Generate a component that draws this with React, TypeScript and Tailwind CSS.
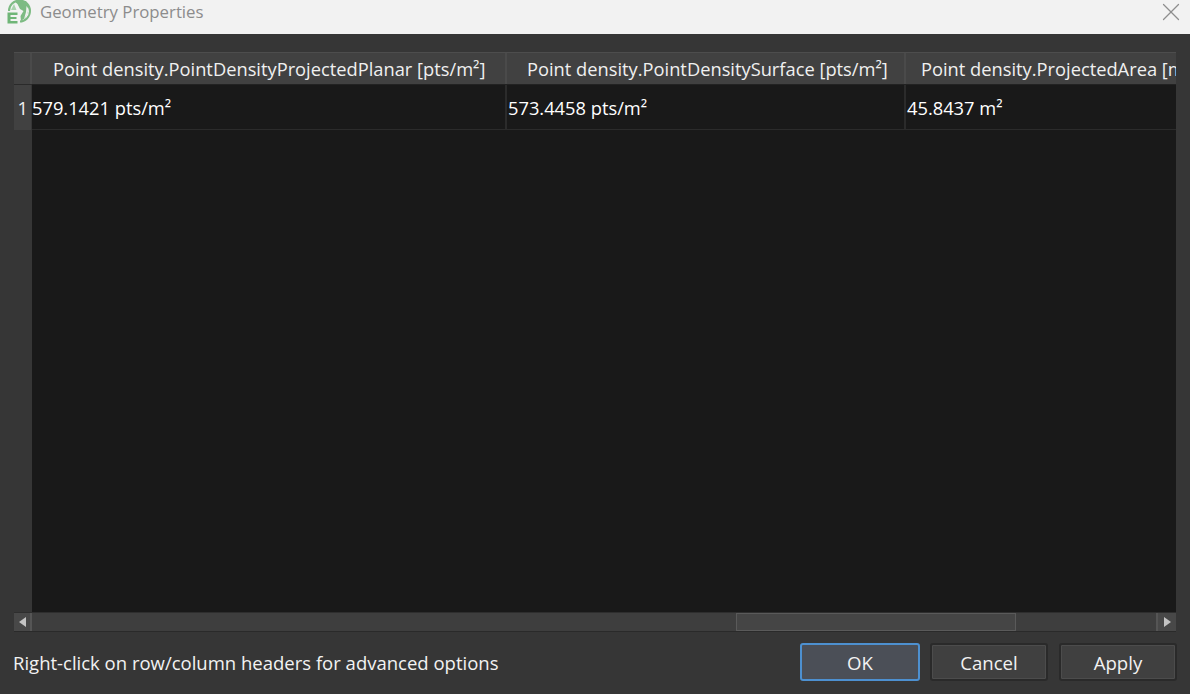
import { X } from 'lucide-react';

const font = "font-['Open_Sans','Noto_Sans',sans-serif]";

function Logo() {
  return (
    <svg width="26" height="25" viewBox="0 0 26 25" className="shrink-0">
      <circle cx="13.5" cy="11" r="10.5" fill="none" stroke="#7dbb83" strokeWidth="2" />
      <path d="M8 1 H20 L23 7 L21.5 13 L19 18 L15 21 L14.5 16 L17.5 11 L14 9 L11.5 4 Z" fill="#7dbb83" />
      <path d="M20.5 6 L22.5 9 L21 15 L18 19 L20 12 Z" fill="#f2f2f2" />
      <path d="M5 10 L8 4 L10.5 10 Z" fill="#a9d3ae" />
      <rect x="0" y="11" width="14" height="14" fill="#f2f2f2" />
      <path d="M1.5 12.5 H11.5 V15 H4.5 V17 H10.5 V19 H4.5 V21 H11.5 V23.5 H1.5 Z" fill="#6fb577" />
    </svg>
  );
}

function HeaderCell({ className, children }: { className: string; children?: React.ReactNode }) {
  return (
    <div className={`h-full shrink-0 bg-[#414141] whitespace-nowrap overflow-hidden text-[#f0f0f0] text-[18.3px] leading-[32px] ${className}`}>
      {children}
    </div>
  );
}

function ValueCell({ className, children }: { className: string; children: React.ReactNode }) {
  return (
    <div className={`h-full shrink-0 whitespace-nowrap overflow-hidden text-white text-[18.3px] leading-[46px] ${className}`}>
      {children}
    </div>
  );
}

function DialogButton({ label, primary, className }: { label: string; primary?: boolean; className: string }) {
  return (
    <button
      className={`h-[38px] rounded-[3px] text-[18.6px] pt-[1px] text-[#f2f2f2] flex items-center justify-center ${
        primary
          ? 'border-2 border-[#4d90d0] bg-[#4b4f57]'
          : 'border-2 border-[#2a2a2a] bg-[#404040] shadow-[inset_0_0_0_1px_#4c4c4c]'
      } ${className}`}
    >
      {label}
    </button>
  );
}

export default function App() {
  return (
    <div className={`w-[1190px] h-[694px] flex flex-col overflow-hidden bg-[#363636] ${font}`}>
      <div className="h-[34px] shrink-0 bg-[#f2f2f2] flex items-start pl-[6px] pr-[4px]">
        <Logo />
        <span className="ml-[8px] text-[16.8px] leading-[24px] text-[#8c8c8c]">Geometry Properties</span>
        <X size={30} strokeWidth={1} className="ml-auto -mt-[3px] text-[#8e8e8e]" />
      </div>

      <div className="mt-[18px] mx-[14px] w-[1162px] flex flex-col">
        <div className="h-[32px] shrink-0 flex border-t border-[#4d4d4d]">
          <HeaderCell className="w-[18px] border-r-2 border-[#4a4a4a]" />
          <HeaderCell className="w-[475px] pl-[21px] border-r-2 border-[#4a4a4a]">
            Point density.PointDensityProjectedPlanar [pts/m²]
          </HeaderCell>
          <HeaderCell className="w-[399px] pl-[20px] border-r-2 border-[#4a4a4a]">
            Point density.PointDensitySurface [pts/m²]
          </HeaderCell>
          <HeaderCell className="w-[270px] pl-[15px]">
            Point density.ProjectedArea [m²]
          </HeaderCell>
        </div>

        <div className="h-[528px] shrink-0 flex">
          <div className="w-[18px] shrink-0 border-t border-[#2a2a2a]">
            <div className="w-[17px] h-[45px] bg-[#414141] text-right pr-[3px] text-[#f0f0f0] text-[18.3px] leading-[46px]">
              1
            </div>
          </div>
          <div className="flex-1 bg-[#191919]">
            <div className="h-[46px] flex border-b border-[#2b2b2b] border-t border-t-[#222222]">
              <ValueCell className="w-[475px] border-r-2 border-[#2b2b2b]">579.1421 pts/m²</ValueCell>
              <ValueCell className="w-[399px] border-r-2 border-[#2b2b2b] pl-[1px]">573.4458 pts/m²</ValueCell>
              <ValueCell className="w-[270px] pl-[1px]">45.8437 m²</ValueCell>
            </div>
          </div>
        </div>

        <div className="h-[20px] flex bg-[#3e3e3e] border-b border-[#2a2a2a] border-t border-t-[#2e2e2e]">
          <div className="w-[18px] border-r-2 border-[#555555] bg-[#484848] flex items-center justify-center">
            <div className="w-0 h-0 border-y-[5px] border-y-transparent border-r-[7px] border-r-[#c4c4c4]" />
          </div>
          <div className="w-[704px]" />
          <div className="w-[280px] border border-[#5a5a5a] bg-[#454545]" />
          <div className="flex-1" />
          <div className="w-[20px] border-l-2 border-[#555555] bg-[#484848] flex items-center justify-center">
            <div className="w-0 h-0 border-y-[5px] border-y-transparent border-l-[7px] border-l-[#c4c4c4]" />
          </div>
        </div>
      </div>

      <div className="mt-[11px] ml-[13px] w-[1164px] flex items-center">
        <span className="text-[18.5px] pt-[1px] text-[#f2f2f2]">Right-click on row/column headers for advanced options</span>
        <div className="ml-auto flex gap-[10px]">
          <DialogButton label="OK" primary className="w-[120px]" />
          <DialogButton label="Cancel" className="w-[118px]" />
          <DialogButton label="Apply" className="w-[118px] ml-[1px]" />
        </div>
      </div>
    </div>
  );
}
